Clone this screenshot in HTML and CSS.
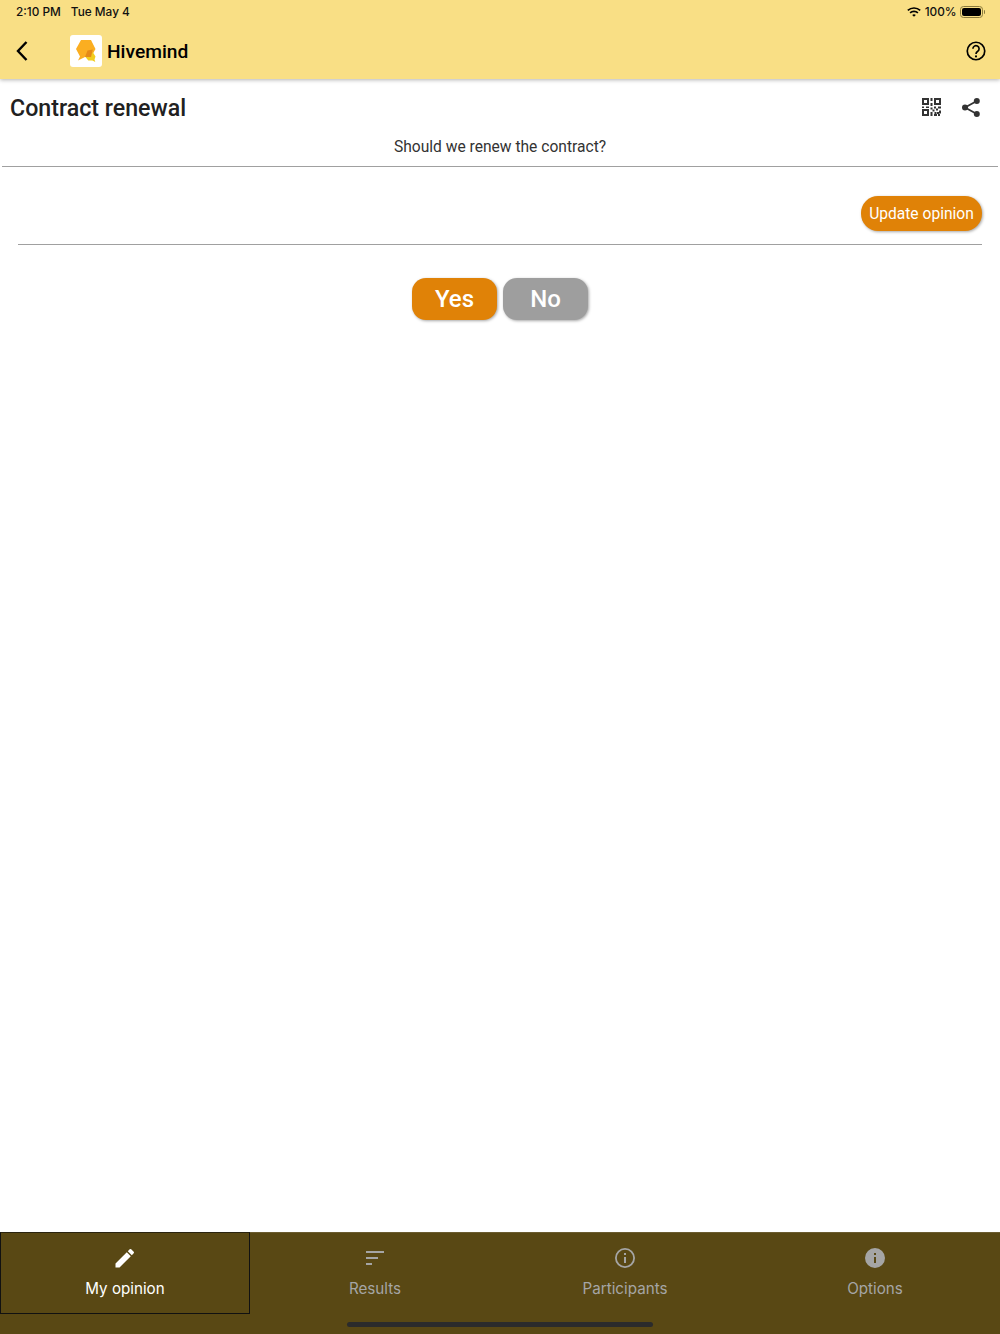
FILE: index.html
```html
<!DOCTYPE html>
<html lang="en">
<head>
    <meta charset="UTF-8">
    <meta name="viewport" content="width=device-width, initial-scale=1.0">
    <title>Hivemind</title>
    <link rel="stylesheet" href="styles.css">
</head>
<body>
    <header class="app-header">
        <div class="status-bar">
            <div class="status-left">
                <span>2:10 PM</span>
                <span>Tue May 4</span>
            </div>
            <div class="status-right">
                <svg class="wifi" viewBox="0 0 14 10" fill="none" stroke="#000" stroke-width="1.700">
                    <path d="M.8 3.400C4.300.2 9.700.2 13.200 3.400"/>
                    <path d="M3.100 5.800C5.200 3.900 8.800 3.900 10.900 5.800"/>
                    <path d="M5.200 7.900l1.800 1.800 1.800-1.800C7.800 7 6.200 7 5.200 7.900z" fill="#000" stroke="none"/>
                </svg>
                <span>100%</span>
                <div class="battery"><div class="battery-fill"></div></div>
                <div class="battery-tip"></div>
            </div>
        </div>
        <div class="toolbar">
            <button class="back-btn" aria-label="Back">
                <svg viewBox="0 0 14 24" fill="none" stroke="#000" stroke-width="2.400">
                    <path d="M11.500 3 3 12l8.500 9"/>
                </svg>
            </button>
            <div class="logo">
                <svg viewBox="0 0 32 32">
                    <path d="M11 5H21L25.500 14 21 22H15L8 25.500 10 21.500 6 14Z" fill="#fbae21"/>
                    <path d="M18 17.500h5l2.500 4-1 3 .8 2.500-3-1.500h-4L15 21.500z" fill="#f2cd1d"/>
                    <path d="M17.500 15.500 22.800 14.500 21 22H15Z" fill="#e58a17"/>
                </svg>
            </div>
            <span class="app-name">Hivemind</span>
            <button class="help-btn" aria-label="Help">
                <svg viewBox="0 0 24 24" fill="none" stroke="#000" stroke-width="2">
                    <circle cx="12" cy="12" r="10.500"/>
                    <path d="M8.300 9.300a3.700 3.700 0 1 1 5.800 3c-1.400.9-2.100 1.600-2.100 3.200"/>
                    <circle cx="12" cy="18.500" r="1.300" fill="#000" stroke="none"/>
                </svg>
            </button>
        </div>
    </header>

    <main class="content">
        <div class="title-row">
            <h1>Contract renewal</h1>
            <div class="title-actions">
                <svg class="qr-icon" viewBox="0 0 19 18" fill="#333">
                    <path fill-rule="evenodd" d="M0 0h7v7H0zM2 2v3h3V2z"/>
                    <path fill-rule="evenodd" d="M12 0h7v7h-7zM14 2v3h3V2z"/>
                    <path fill-rule="evenodd" d="M0 11h7v7H0zM2 13v3h3v-3z"/>
                    <path d="M8.500 0h2v3h-2zM8.500 5h2v3h-2zM0 8.500h2v1.500H0zM4 8.500h3v1.500H4zM8.500 9.500h2v2h-2zM12 8.500h2v2h-2zM16 8.500h3v2h-3zM10.500 11.500h2v2h-2zM14 10.500h2v2h-2zM17 12.500h2v3h-2zM8.500 14h2v4h-2zM12.500 14h2v2h-2zM15 14h2v2h-2zM12 16h3v2h-3zM16 16h2v2h-2z"/>
                </svg>
                <svg class="share-icon" viewBox="0 0 18 19" fill="#333">
                    <circle cx="14.800" cy="3" r="3"/>
                    <circle cx="3" cy="9.500" r="3"/>
                    <circle cx="14.800" cy="16" r="3"/>
                    <path d="M3 9.500 14.800 3M3 9.500 14.800 16" stroke="#333" stroke-width="1.800"/>
                </svg>
            </div>
        </div>
        <p class="question">Should we renew the contract?</p>
        <hr class="divider-wide">
        <div class="update-row">
            <button class="btn-update">Update opinion</button>
        </div>
        <hr class="divider-inset">
        <div class="answers">
            <button class="btn-answer btn-yes">Yes</button>
            <button class="btn-answer btn-no">No</button>
        </div>
    </main>

    <nav class="tab-bar">
        <div class="tabs">
            <div class="tab active">
                <svg viewBox="0 0 24 24" fill="#fff">
                    <path d="M2.500 17.500v4h4L17.800 10.200l-4-4zM20.700 7.300a1.100 1.100 0 0 0 0-1.500l-2.500-2.500a1.100 1.100 0 0 0-1.500 0l-1.900 1.900 4 4z"/>
                </svg>
                <span>My opinion</span>
            </div>
            <div class="tab">
                <svg viewBox="0 0 24 24" fill="#a5a5a5">
                    <path d="M3 5h18v2H3zM3 11h12v2H3zM3 17h6v2H3z"/>
                </svg>
                <span>Results</span>
            </div>
            <div class="tab">
                <svg viewBox="0 0 24 24" fill="#a5a5a5">
                    <path fill-rule="evenodd" d="M12 2a10 10 0 1 0 0 20 10 10 0 0 0 0-20zm0 1.800a8.200 8.200 0 1 1 0 16.400 8.200 8.200 0 0 1 0-16.400z"/>
                    <path d="M11 11h2v6h-2zM11 7h2v2h-2z"/>
                </svg>
                <span>Participants</span>
            </div>
            <div class="tab">
                <svg viewBox="0 0 24 24" fill="#a5a5a5">
                    <path fill-rule="evenodd" d="M12 2a10 10 0 1 0 0 20 10 10 0 0 0 0-20zM11 11h2v6h-2zM11 7h2v2h-2z"/>
                </svg>
                <span>Options</span>
            </div>
        </div>
        <div class="home-indicator"></div>
    </nav>
</body>
</html>
```

FILE: styles.css
```css
* {
    margin: 0;
    padding: 0;
    box-sizing: border-box;
}

html, body {
    height: 100%;
}

body {
    display: flex;
    flex-direction: column;
    height: 1334px;
    overflow: hidden;
    font-family: Roboto, 'Liberation Sans', sans-serif;
    background-color: #fff;
    color: #212121;
}

button {
    border: none;
    background: none;
    font-family: inherit;
    cursor: pointer;
}

.app-header {
    height: 79px;
    background-color: #f9df85;
    box-shadow: 0 1px 4px rgba(0,0,0,0.3);
    position: relative;
}

.status-bar {
    height: 23px;
    display: flex;
    justify-content: space-between;
    align-items: center;
    padding: 0 15px 0 16px;
    font-family: Inter, 'Liberation Sans', sans-serif;
    font-size: 11.800px;
    font-weight: 500;
    color: #111;
}

.status-left {
    display: flex;
    gap: 10px;
}

.status-right {
    display: flex;
    align-items: center;
}

.wifi {
    width: 14px;
    height: 10px;
    margin-right: 4px;
}

.battery {
    width: 23px;
    height: 12px;
    border: 1px solid #8a7a3c;
    border-radius: 3.500px;
    padding: 1px;
    margin-left: 3px;
}

.battery-fill {
    height: 100%;
    background: #000;
    border-radius: 2px;
}

.battery-tip {
    width: 1.500px;
    height: 4px;
    margin-left: 1px;
    background: #8a7a3c;
    border-radius: 0 1px 1px 0;
}

.toolbar {
    height: 56px;
    display: flex;
    align-items: center;
    padding: 0 14px 0 15px;
}

.back-btn {
    width: 14px;
    height: 24px;
    margin-right: 41px;
}

.back-btn svg {
    width: 14px;
    height: 24px;
    display: block;
}

.logo {
    width: 32px;
    height: 32px;
    background: #fff;
    border-radius: 3px;
    margin-right: 5px;
}

.logo svg {
    width: 32px;
    height: 32px;
    display: block;
}

.app-name {
    font-size: 19.200px;
    font-weight: 500;
    color: #000;
    flex: 1;
}

.help-btn {
    width: 20px;
    height: 20px;
}

.help-btn svg {
    width: 20px;
    height: 20px;
    display: block;
}

.content {
    flex: 1;
}

.title-row {
    height: 58px;
    display: flex;
    justify-content: space-between;
    align-items: center;
    padding: 0 20px 0 10px;
}

h1 {
    font-size: 23.200px;
    font-weight: 500;
    color: #212121;
}

.title-actions {
    display: flex;
    align-items: center;
    gap: 21px;
    padding-bottom: 2px;
}

.qr-icon {
    width: 19px;
    height: 18px;
}

.share-icon {
    width: 18px;
    height: 19px;
}

.question {
    height: 20px;
    line-height: 20px;
    text-align: center;
    font-size: 15.600px;
    color: #333;
}

.divider-wide {
    border: none;
    height: 1px;
    background: #a0a0a0;
    margin: 9px 2px 0;
}

.update-row {
    display: flex;
    justify-content: flex-end;
    padding: 29px 18px 13px 0;
}

.btn-update {
    width: 121px;
    height: 35px;
    background: #e08207;
    color: #fff;
    font-size: 15.600px;
    border-radius: 17px;
    box-shadow: 1px 1px 3px rgba(0,0,0,0.35);
}

.divider-inset {
    border: none;
    height: 1px;
    background: #a0a0a0;
    margin: 0 18px;
}

.answers {
    display: flex;
    justify-content: center;
    gap: 6px;
    padding-top: 33px;
}

.btn-answer {
    width: 85px;
    height: 42px;
    color: #fff;
    font-size: 24px;
    font-weight: 500;
    border-radius: 14px;
    box-shadow: 1px 1px 3px rgba(0,0,0,0.35);
}

.btn-yes {
    background: #e08207;
}

.btn-no {
    background: #9e9e9e;
}

.tab-bar {
    height: 102px;
    background: #594814;
    border-top: 1px solid #6b5c30;
}

.tabs {
    display: grid;
    grid-template-columns: repeat(4, 1fr);
    height: 81px;
}

.tab {
    display: flex;
    flex-direction: column;
    align-items: center;
    padding-top: 13px;
    color: #a5a5a5;
    font-family: Inter, Roboto, sans-serif;
    font-size: 15.200px;
}

.tab svg {
    width: 24px;
    height: 24px;
    margin-bottom: 9px;
}

.tab.active {
    color: #fff;
    border: 1px solid #111;
    border-top-color: #2a2410;
    margin-top: -1px;
    padding-top: 13px;
    height: 82px;
}

.home-indicator {
    width: 306px;
    height: 5px;
    margin: 8px auto 0;
    background: #2b2b2b;
    border-radius: 3px;
}
```
